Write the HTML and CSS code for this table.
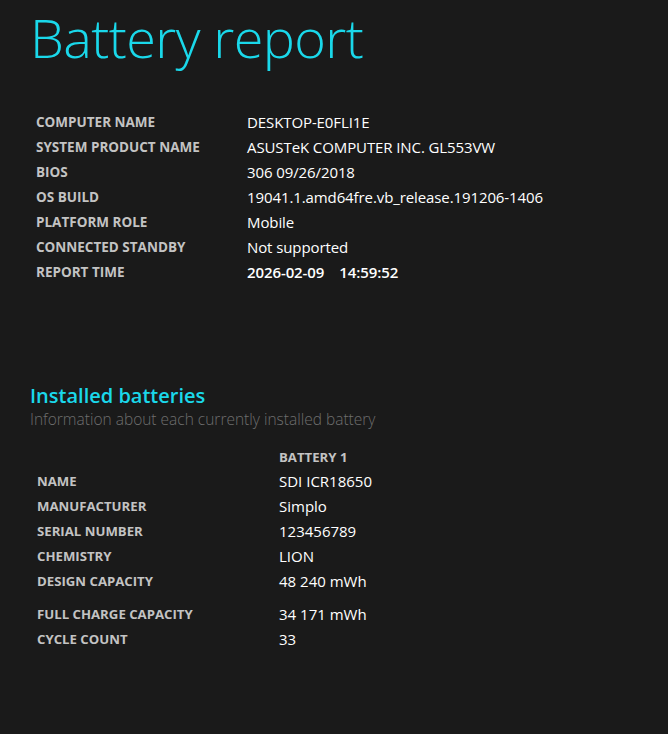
FILE: index.html
```html
<!DOCTYPE html>
<html>
<head>
<meta charset="utf-8">
<link rel="stylesheet" href="styles.css">
</head>
<body>
<main class="page">
  <h1 class="title">Battery report</h1>
  <div class="info">
    <div class="label">COMPUTER NAME</div><div class="value">DESKTOP-E0FLI1E</div>
    <div class="label">SYSTEM PRODUCT NAME</div><div class="value">ASUSTeK COMPUTER INC. GL553VW</div>
    <div class="label">BIOS</div><div class="value">306 09/26/2018</div>
    <div class="label">OS BUILD</div><div class="value">19041.1.amd64fre.vb_release.191206-1406</div>
    <div class="label">PLATFORM ROLE</div><div class="value">Mobile</div>
    <div class="label">CONNECTED STANDBY</div><div class="value">Not supported</div>
    <div class="label">REPORT TIME</div><div class="value strong"><span>2026-02-09</span><span class="time">14:59:52</span></div>
  </div>

  <section class="section">
    <h2 class="section-title">Installed batteries</h2>
    <div class="section-sub">Information about each currently installed battery</div>
    <div class="batt">
      <div class="label"></div><div class="label head">BATTERY 1</div>
      <div class="label">NAME</div><div class="value">SDI ICR18650</div>
      <div class="label">MANUFACTURER</div><div class="value">Simplo</div>
      <div class="label">SERIAL NUMBER</div><div class="value">123456789</div>
      <div class="label">CHEMISTRY</div><div class="value">LION</div>
      <div class="label">DESIGN CAPACITY</div><div class="value">48 240 mWh</div>
      <div class="label gap">FULL CHARGE CAPACITY</div><div class="value gap">34 171 mWh</div>
      <div class="label">CYCLE COUNT</div><div class="value">33</div>
    </div>
  </section>
</main>
</body>
</html>
```
FILE: styles.css
```css
html, body {
  margin: 0;
  padding: 0;
  background: #1a1a1a;
}
body {
  font-family: "Open Sans", "Noto Sans", sans-serif;
  color: #ffffff;
  min-height: 734px;
}
.page {
  padding: 0 0 0 30px;
}
.title {
  margin: 0;
  font-size: 54px;
  font-weight: 300;
  line-height: 74px;
  color: #1ad8ea;
  letter-spacing: -0.6px;
}
.info {
  display: grid;
  grid-template-columns: 211px auto;
  grid-auto-rows: 25px;
  margin-top: 36px;
  margin-left: 6px;
}
.label {
  font-size: 13.5px;
  font-weight: 700;
  color: #c3c3c3;
  line-height: 25px;
}
.value {
  font-size: 15px;
  color: #ffffff;
  line-height: 25px;
  letter-spacing: -0.1px;
}
.value.strong {
  font-weight: 600;
}
.value .time {
  margin-left: 15px;
}
.section {
  margin-top: 98px;
}
.section-title {
  margin: 0;
  font-size: 20px;
  font-weight: 600;
  color: #1ad8ea;
  line-height: 26px;
}
.section-sub {
  font-size: 15.5px;
  font-weight: 300;
  color: #6e6e6e;
  line-height: 20px;
}
.batt {
  display: grid;
  grid-template-columns: 242px auto;
  margin-top: 16px;
  margin-left: 7px;
}
.batt .label {
  font-size: 13.2px;
  line-height: 25px;
}
.batt .value {
  line-height: 25px;
  letter-spacing: 0;
}
.batt .head {
  line-height: 24px;
}
.batt .gap {
  margin-top: 8px;
}
```
